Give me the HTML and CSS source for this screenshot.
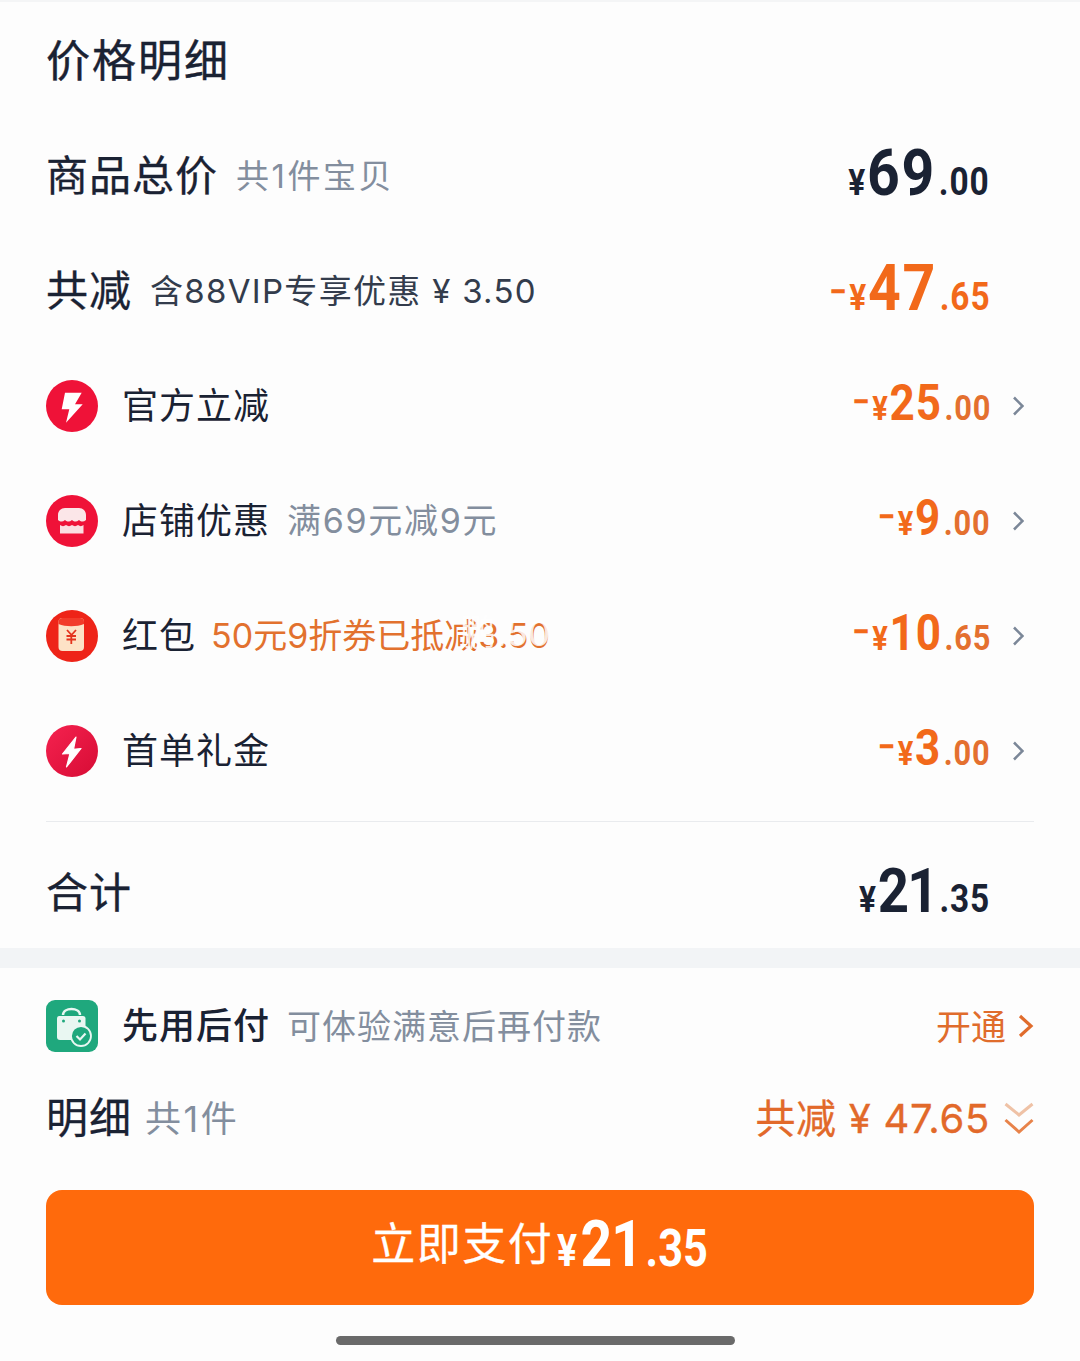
FILE: index.html
```html
<!DOCTYPE html>
<html lang="zh-CN">
<head>
    <meta charset="UTF-8">
    <title>价格明细</title>
    <link rel="stylesheet" href="styles.css">
</head>
<body>
    <section class="detail">
        <h1 class="title">价格明细</h1>

        <div class="row">
            <div class="left"><span class="name">商品总价</span><span class="note">共1件宝贝</span></div>
            <div class="price dark"><span class="cur">¥</span><span class="int big">69</span><span class="dec">.00</span></div>
        </div>
        <div class="row">
            <div class="left"><span class="name">共减</span><span class="note note-dark">含88VIP专享优惠 ¥ 3.50</span></div>
            <div class="price orange"><span class="sign">−</span><span class="cur">¥</span><span class="int big">47</span><span class="dec">.65</span></div>
        </div>

        <div class="row">
            <div class="left">
                <svg class="icon" viewBox="0 0 52 52"><circle cx="26" cy="26" r="26" fill="#ef1238"/><path d="M19 12.700h16.700L29 24.300h7.700L20 42.700l3.300-13.400h-7.600z" fill="#fff"/></svg>
                <span class="label">官方立减</span>
            </div>
            <div class="right">
                <div class="price orange small"><span class="sign">−</span><span class="cur">¥</span><span class="int">25</span><span class="dec">.00</span></div>
                <svg class="chev" viewBox="0 0 12 20"><path d="M2 1.500L10.500 10 2 18.500" fill="none" stroke="#7b8798" stroke-width="2.600"/></svg>
            </div>
        </div>
        <div class="row">
            <div class="left">
                <svg class="icon" viewBox="0 0 52 52"><circle cx="26" cy="26" r="26" fill="#ef1238"/><path d="M12 25v-5c0-4 3-7 7-7h14c4 0 7 3 7 7v5c-2.500 2-4.500 2-7 0-2.500 2-4.500 2-7 0-2.500 2-4.500 2-7 0-2.500 2-4.500 2-7 0z" fill="#fbe6e8"/><path d="M14 30c2 1.500 4 1.500 6 0 2 1.500 4 1.500 6 0 2 1.500 4 1.500 6 0 2 1.500 3.500 1.500 5.500 0v8.500h-23.500z" fill="#fbdde1"/></svg>
                <span class="label">店铺优惠</span><span class="note small-note note-num">满69元减9元</span>
            </div>
            <div class="right">
                <div class="price orange small"><span class="sign">−</span><span class="cur">¥</span><span class="int">9</span><span class="dec">.00</span></div>
                <svg class="chev" viewBox="0 0 12 20"><path d="M2 1.500L10.500 10 2 18.500" fill="none" stroke="#7b8798" stroke-width="2.600"/></svg>
            </div>
        </div>
        <div class="row">
            <div class="left">
                <svg class="icon" viewBox="0 0 52 52"><circle cx="26" cy="26" r="26" fill="#ee2418"/><rect x="12.500" y="8" width="25.500" height="33" rx="4" fill="#fde2c6"/><path d="M12.500 12c0-3 1.500-4 4-4h17.500c2.500 0 4 1 4 4v2c-7 3-18.500 3-25.500 0z" fill="#f23b2a"/><path d="M21 20l4.500 5 4.500-5M20.500 26h9.500M20.500 29.500h9.500M25.300 25v9" fill="none" stroke="#e4331d" stroke-width="1.800"/></svg>
                <span class="label">红包</span>
                <span class="coupon">50元9折券已抵减3.50<span class="mark">鹏.50</span></span>
            </div>
            <div class="right">
                <div class="price orange small"><span class="sign">−</span><span class="cur">¥</span><span class="int">10</span><span class="dec">.65</span></div>
                <svg class="chev" viewBox="0 0 12 20"><path d="M2 1.500L10.500 10 2 18.500" fill="none" stroke="#7b8798" stroke-width="2.600"/></svg>
            </div>
        </div>
        <div class="row">
            <div class="left">
                <svg class="icon" viewBox="0 0 52 52"><defs><linearGradient id="flash" x1="0" y1="0" x2="1" y2="1"><stop offset="0" stop-color="#f5224f"/><stop offset="1" stop-color="#d70c35"/></linearGradient></defs><circle cx="26" cy="26" r="26" fill="url(#flash)"/><path d="M30 12L16.500 29l7.500-.5L20.500 42 35 23.500l-7.500.8z" fill="#fff" stroke="#fff" stroke-width="1.200" stroke-linejoin="round"/></svg>
                <span class="label">首单礼金</span>
            </div>
            <div class="right">
                <div class="price orange small"><span class="sign">−</span><span class="cur">¥</span><span class="int">3</span><span class="dec">.00</span></div>
                <svg class="chev" viewBox="0 0 12 20"><path d="M2 1.500L10.500 10 2 18.500" fill="none" stroke="#7b8798" stroke-width="2.600"/></svg>
            </div>
        </div>

        <div class="row row-total">
            <div class="left"><span class="name">合计</span></div>
            <div class="price dark total"><span class="cur">¥</span><span class="int">21</span><span class="dec">.35</span></div>
        </div>
    </section>

    <section class="checkout">
        <div class="pay-later">
            <div class="left">
                <svg class="icon" viewBox="0 0 52 52"><rect width="52" height="52" rx="9" fill="#1fa87d"/><path d="M13 16h24c1.500 0 2.500 1 2.500 2.500V37c0 2-1 3-3 3H14c-2 0-3-1-3-3V18.500c0-1.500 1-2.500 2-2.500z" fill="#e9f7f2"/><path d="M17 15c0-8 17-8 17 0" fill="none" stroke="#e9f7f2" stroke-width="2.500"/><circle cx="17.500" cy="21" r="1.500" fill="#1fa87d"/><circle cx="33.500" cy="21" r="1.500" fill="#1fa87d"/><circle cx="35" cy="36" r="10" fill="#1fa87d" stroke="#e9f7f2" stroke-width="1.800"/><path d="M30.500 36l3.500 3.500 5.500-6" fill="none" stroke="#e9f7f2" stroke-width="2.200"/></svg>
                <span class="label label-medium">先用后付</span><span class="note small-note">可体验满意后再付款</span>
            </div>
            <div class="open"><span>开通</span><svg class="chev-open" viewBox="0 0 16 24"><path d="M2 2l11 10L2 22" fill="none" stroke="#e06c2c" stroke-width="3.200"/></svg></div>
        </div>
        <div class="summary">
            <div class="left"><span class="name">明细</span><span class="note count">共1件</span></div>
            <div class="saved"><span>共减 ¥ 47.65</span><svg class="double" viewBox="0 0 30 34"><path d="M1.500 3L15 14 28.500 3" fill="none" stroke="#efc2a6" stroke-width="3"/><path d="M1.500 19L15 31l13.500-12" fill="none" stroke="#e8834a" stroke-width="3"/></svg></div>
        </div>
        <button class="pay"><span class="pay-text">立即支付</span><span class="pay-price"><span class="cur">¥</span><span class="int">21</span><span class="dec">.35</span></span></button>
    </section>
    <div class="home-bar"></div>
</body>
</html>
```

FILE: styles.css
```css
* {
    box-sizing: border-box;
}

body {
    margin: 0;
    height: 1361px;
    overflow: hidden;
    background-color: #fdfdfd;
    color: #1a2233;
    font-family: Inter, "Noto Sans CJK SC", sans-serif;
}

.detail {
    padding: 0 46px;
    height: 948px;
    border-top: 2px solid #f4f5f6;
}

.title {
    margin: 0;
    height: 116px;
    padding-top: 27px;
    font-size: 44px;
    line-height: 64px;
    font-weight: 400;
    letter-spacing: 2px;
    -webkit-text-stroke: 0.4px #1a2233;
}

.row {
    display: flex;
    justify-content: space-between;
    align-items: center;
    height: 115px;
}

.left {
    display: flex;
    align-items: center;
}

.right {
    display: flex;
    align-items: center;
    margin-right: 10px;
}

.name {
    font-size: 42px;
    letter-spacing: 1px;
    line-height: 60px;
    -webkit-text-stroke: 0.3px #1a2233;
}

.note {
    padding-bottom: 4px;
    margin-left: 18px;
    font-size: 33px;
    letter-spacing: 2.500px;
    color: #838e9e;
}

.note-dark {
    color: #333c4c;
    letter-spacing: 1.300px;
}

.small-note {
    margin-left: 17px;
    font-size: 34px;
    letter-spacing: 1px;
}

.note-num {
    letter-spacing: 1.700px;
}

.count {
    margin-left: 13px;
    font-size: 36px;
    letter-spacing: 2.500px;
}

.icon {
    width: 52px;
    height: 52px;
    flex: none;
}

.label {
    padding-bottom: 6px;
    margin-left: 24px;
    font-size: 36px;
    letter-spacing: 1px;
}

.label-medium {
    font-weight: 500;
}

.coupon {
    position: relative;
    padding-bottom: 4px;
    margin-left: 15px;
    font-size: 34px;
    color: #e2712e;
}

.mark {
    position: absolute;
    left: 249px;
    top: -5px;
    font-size: 36px;
    color: rgba(255, 255, 255, 0.85);
}

.price {
    margin-right: 44px;
    margin-bottom: 5px;
    font-family: Roboto, sans-serif;
    font-weight: 700;
    transform: scaleX(0.88);
    transform-origin: right center;
}

.price .sign {
    margin-right: 3px;
    font-size: 36px;
    vertical-align: 6px;
}

.price .cur {
    margin-right: 2px;
    font-size: 36px;
}

.price .int {
    font-size: 54px;
    letter-spacing: 1px;
}

.price .int.big {
    font-size: 65px;
    letter-spacing: 2px;
}

.price .dec {
    margin-left: 3px;
    font-size: 38px;
    letter-spacing: 1px;
}

.dark {
    color: #1a2233;
}

.orange {
    color: #f2691a;
}

.small {
    margin-right: 21px;
}

.small .cur {
    font-size: 33px;
}

.small .int {
    font-size: 50px;
}

.small .dec {
    font-size: 35px;
    color: #e4702f;
}

.chev {
    width: 12px;
    height: 20px;
    flex: none;
}

.row-total {
    height: 143px;
    border-top: 1px solid #e9ebee;
    margin-top: 13px;
}

.total .int {
    font-size: 62px;
    letter-spacing: -2px;
}

.checkout {
    padding: 32px 46px 0;
    border-top: 20px solid #f2f4f6;
}

.pay-later,
.summary {
    display: flex;
    justify-content: space-between;
    align-items: center;
}

.pay-later {
    height: 52px;
}

.summary {
    margin-top: 36px;
    height: 60px;
}

.open {
    display: flex;
    align-items: center;
    gap: 12px;
    font-size: 35px;
    color: #e06c2c;
}

.open span {
    padding-bottom: 4px;
}

.chev-open {
    width: 16px;
    height: 24px;
    flex: none;
}

.saved {
    display: flex;
    align-items: center;
    gap: 14px;
    font-size: 40px;
    letter-spacing: 0.700px;
    color: #e2692a;
}

.saved span {
    padding-bottom: 4px;
    -webkit-text-stroke: 0.3px #e2692a;
}

.double {
    width: 30px;
    height: 34px;
    flex: none;
}

.pay {
    display: flex;
    justify-content: center;
    align-items: baseline;
    width: 100%;
    height: 115px;
    margin-top: 42px;
    padding: 10px 0 0;
    border: none;
    border-radius: 16px;
    background-color: #ff6a0c;
    color: #fff;
    font-family: "Noto Sans CJK SC", sans-serif;
    font-size: 44px;
}

.pay-text {
    letter-spacing: 1.500px;
    margin-right: 4px;
    -webkit-text-stroke: 0.3px #fff;
}

.pay-price {
    margin-right: -26px;
    font-family: Roboto, sans-serif;
    font-weight: 700;
    transform: translateY(6px) scaleX(0.85);
    transform-origin: left center;
}

.pay .cur {
    margin-right: 4px;
    font-size: 44px;
}

.pay .int {
    font-size: 65px;
    letter-spacing: -1px;
}

.pay .dec {
    margin-left: 4px;
    font-size: 51px;
}

.home-bar {
    width: 399px;
    height: 9px;
    margin: 31px 0 0 336px;
    border-radius: 5px;
    background-color: #6a6a6a;
}
```
